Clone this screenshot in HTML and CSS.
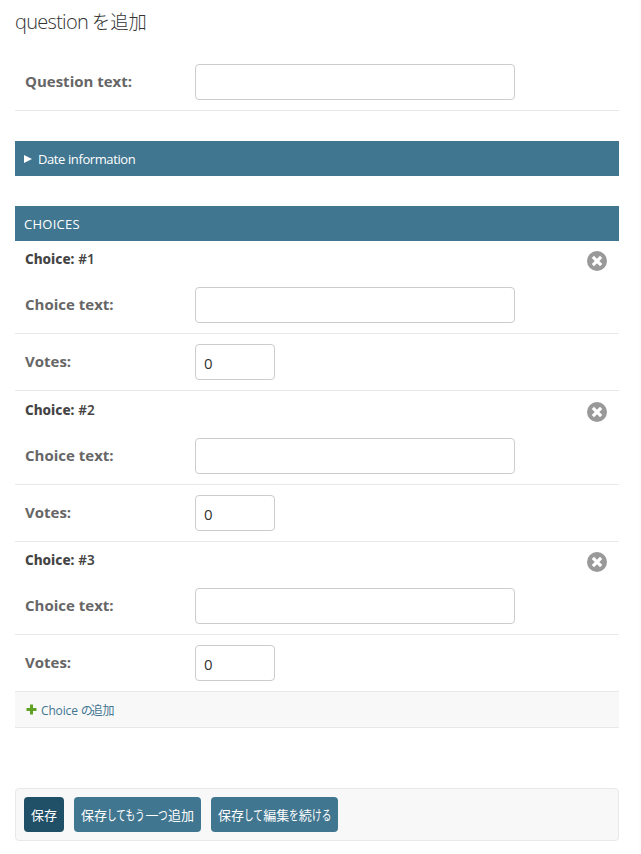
FILE: index.html
```html
<!DOCTYPE html>
<html lang="ja">
<head>
<meta charset="utf-8">
<title>question を追加</title>
<link rel="stylesheet" href="styles.css">
</head>
<body>
<svg class="defs" width="0" height="0"><symbol id="remove" viewBox="0 0 20 20"><circle cx="10" cy="10" r="10" fill="#999"/><path d="M6.7 6.7l6.6 6.6M13.3 6.7l-6.6 6.6" stroke="#fff" stroke-width="3.6" stroke-linecap="square" transform="translate(1 1) scale(.9)"/></symbol></svg>
<main>
<h1><span>question </span><span class="title-ja">を追加</span></h1>
<form>
<div class="row"><label class="question">Question text:</label><input type="text"></div>
<h2 class="date"><span class="arrow"></span>Date information</h2>
<h2 class="choices">CHOICES</h2>
<section><h3 class="first"><span><b>Choice:</b> #1</span><svg class="remove"><use href="#remove"/></svg></h3>
<div class="row"><label class="choice">Choice text:</label><input type="text"></div>
<div class="row"><label>Votes:</label><input class="votes" type="text" value="0"></div></section>
<section><h3 class="second"><span><b>Choice:</b> #2</span><svg class="remove"><use href="#remove"/></svg></h3>
<div class="row"><label class="choice">Choice text:</label><input type="text"></div>
<div class="row"><label>Votes:</label><input class="votes" type="text" value="0"></div></section>
<section><h3><span><b>Choice:</b> #3</span><svg class="remove"><use href="#remove"/></svg></h3>
<div class="row"><label class="choice">Choice text:</label><input type="text"></div>
<div class="row"><label>Votes:</label><input class="votes" type="text" value="0"></div></section>
<div class="add"><svg width="11" height="11" viewBox="0 0 11 11"><path d="M4 .5h3V4h3.5v3H7v3.5H4V7H.5V4H4z" fill="#5fa225"/></svg><a>Choice <span class="no">の</span>追加</a></div>
<div class="actions">
<button type="button" class="save">保存</button>
<button type="button" class="another">保存<span class="kana four">してもう</span>一<span class="kana one">つ</span>追加</button>
<button type="button" class="continue">保存<span class="kana two">して</span>編集<span class="kana one">を</span>続<span class="kana two">ける</span></button>
</div>
</form>
</main>
</body>
</html>
```
FILE: styles.css
```css
* { box-sizing: border-box; }
body { margin: 0; background: #fff; color: #333; font: 13px/18px "Noto Sans", "Noto Sans CJK JP", sans-serif; }
.defs { position: absolute; }
main { width: 641px; height: 854px; padding: 8px 20px 0 15px; border-right: 2px solid #fcfcfc; overflow: hidden; }
h1 { margin: 0; height: 46px; font-family: "Open Sans", "Noto Sans CJK JP", sans-serif; font-size: 20px; line-height: 27px; font-weight: 300; white-space: pre; letter-spacing: -.72px; color: #333; }
.title-ja { display: inline-block; font-size: 19px; letter-spacing: 0; transform: scaleX(.96); transform-origin: left; }
.row { display: flex; height: 57px; padding: 10px; border-bottom: 1px solid #e8e8e8; }
label { width: 170px; padding-top: 8px; font-family: "Open Sans", sans-serif; font-size: 15px; font-weight: 700; color: #666; white-space: nowrap; letter-spacing: 0; }
input { width: 320px; height: 36px; padding: 1px 8px 0; border: 1px solid #ccc; border-radius: 4px; outline: 0; background: #fff; color: #333; font: 15px "Open Sans", sans-serif; }
.votes { width: 80px; }
h2 { display: flex; align-items: center; height: 35px; margin: 30px 0; padding: 1px 9px 0; background: #417690; color: #fff; font-family: "Open Sans", sans-serif; font-size: 13px; font-weight: 400; }
.date { letter-spacing: -.4px; }
.choices { margin-bottom: 0; letter-spacing: .25px; }
.arrow { width: 0; height: 0; margin-right: 6px; border-left: 8px solid #fff; border-top: 4px solid transparent; border-bottom: 4px solid transparent; }
h3 { display: flex; justify-content: space-between; height: 36px; margin: 0; padding: 9px 12px 0 10px; font-family: "Noto Sans", sans-serif; font-size: 13.5px; line-height: 18px; font-weight: 600; color: #444; letter-spacing: .15px; }
h3.second { height: 37px; padding-top: 10px; }
h3 b { font-weight: 800; letter-spacing: 0; }
.remove { width: 20px; height: 20px; margin-top: 1px; }
.add { display: flex; align-items: center; height: 36px; padding: 0 11px; gap: 4px; background: #f8f8f8; border-bottom: 1px solid #e8e8e8; font-family: "Open Sans", "Noto Sans CJK JP", sans-serif; font-size: 12px; letter-spacing: -.15px; color: #417690; }
.add a { padding-top: 2px; white-space: nowrap; }
.no { letter-spacing: -2px; }
.actions { display: flex; gap: 10px; height: 53px; margin-top: 60px; padding: 8px; border: 1px solid #e8e8e8; border-radius: 4px; background: #f8f8f8; }
button { height: 35px; width: 127px; padding: 0 0 0 7px; border: 0; border-radius: 4px; background: #417690; color: #fff; font: 13px/18px "Noto Sans CJK JP", sans-serif; text-align: left; white-space: nowrap; }
.save { width: 40px; background: #205067; }
.kana { display: inline-block; font-size: 14px; transform: scaleX(.69); transform-origin: left; }
.one { width: 9.6px; }
.two { width: 19.2px; }
.four { width: 38.4px; }
```
